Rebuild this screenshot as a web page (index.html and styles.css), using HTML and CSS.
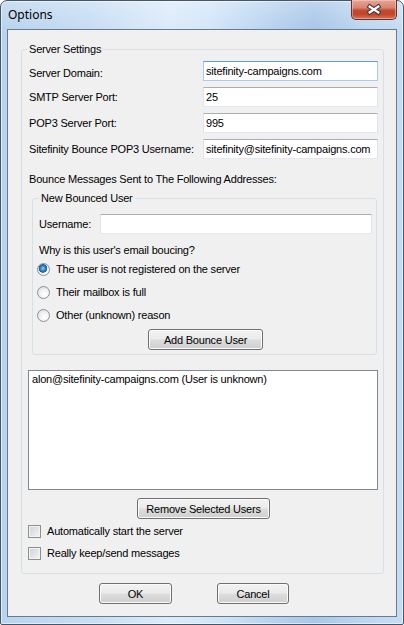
FILE: index.html
```html
<!DOCTYPE html>
<html>
<head>
<meta charset="utf-8">
<link rel="stylesheet" href="styles.css">
</head>
<body>
<div class="window">
  <div class="titlebar">
    <span class="title">Options</span>
    <button class="close" aria-label="Close">
      <svg width="46" height="19" viewBox="0 0 46 19">
        <path d="M18.5 6.5 L27.5 12.5 M27.5 6.5 L18.5 12.5" stroke="#4a3a3a" stroke-width="4.6" stroke-linecap="square" fill="none"/>
        <path d="M18.5 6.5 L27.5 12.5 M27.5 6.5 L18.5 12.5" stroke="#ffffff" stroke-width="2.4" stroke-linecap="square" fill="none"/>
      </svg>
    </button>
  </div>
  <div class="client">
    <fieldset class="group server">
      <legend>Server Settings</legend>
      <div class="fields">
        <label class="lbl lbl-first">Server Domain:</label>
        <input class="txt focused" type="text" value="sitefinity-campaigns.com">
        <label class="lbl">SMTP Server Port:</label>
        <input class="txt" type="text" value="25">
        <label class="lbl">POP3 Server Port:</label>
        <input class="txt" type="text" value="995">
        <label class="lbl">Sitefinity Bounce POP3 Username:</label>
        <input class="txt" type="text" value="sitefinity@sitefinity-campaigns.com">
      </div>
      <div class="bounce-title">Bounce Messages Sent to The Following Addresses:</div>
      <fieldset class="group newuser">
        <legend>New Bounced User</legend>
        <div class="user-row">
          <label class="user-lbl">Username:</label>
          <input class="txt user-input" type="text" value="">
        </div>
        <div class="why">Why is this user's email boucing?</div>
        <div class="radios">
          <label class="opt"><input class="radio" type="radio" name="reason" checked><span>The user is not registered on the server</span></label>
          <label class="opt"><input class="radio" type="radio" name="reason"><span>Their mailbox is full</span></label>
          <label class="opt"><input class="radio" type="radio" name="reason"><span>Other (unknown) reason</span></label>
        </div>
        <button class="btn add-btn">Add Bounce User</button>
      </fieldset>
      <div class="list">
        <div class="list-item">alon@sitefinity-campaigns.com (User is unknown)</div>
      </div>
      <button class="btn remove-btn">Remove Selected Users</button>
      <div class="checks">
        <label class="opt chk-row"><input class="check" type="checkbox"><span>Automatically start the server</span></label>
        <label class="opt chk-row"><input class="check" type="checkbox"><span>Really keep/send messages</span></label>
      </div>
    </fieldset>
    <div class="dialog-buttons">
      <button class="btn ok-btn">OK</button>
      <button class="btn cancel-btn">Cancel</button>
    </div>
  </div>
</div>
</body>
</html>
```

FILE: styles.css
```css
* { box-sizing: border-box; }

html, body {
  margin: 0;
  padding: 0;
  background: #ffffff;
}

body {
  font-family: "Liberation Sans", Arial, sans-serif;
  font-size: 11px;
  letter-spacing: -0.2px;
  color: #000;
}

.window {
  width: 404px;
  height: 625px;
  border: 1px solid #44566b;
  border-radius: 7px 7px 2px 2px;
  padding: 0 6px 7px 6px;
  display: flex;
  flex-direction: column;
  background:
    linear-gradient(180deg, rgba(255,255,255,0.25) 0px, rgba(255,255,255,0) 28px),
    linear-gradient(90deg, #b9d3ee 0%, #c7ddf3 22%, #dcebfa 42%, #d3e6f8 52%, #b7d2ee 68%, #a8c7e8 78%, #bdd6f0 90%, #c6dcf3 100%);
  box-shadow: inset 0 0 0 1px rgba(255,255,255,0.55);
}

.titlebar {
  height: 28px;
  display: flex;
  align-items: flex-start;
}

.title {
  font-family: "Noto Sans", "Open Sans", sans-serif;
  font-size: 12px;
  letter-spacing: 0;
  line-height: 16px;
  padding-top: 6px;
  padding-left: 1px;
  color: #000;
}

.close {
  margin-left: auto;
  margin-top: -1px;
  width: 46px;
  height: 20px;
  padding: 0;
  border: 1px solid #6b2f26;
  border-top: none;
  border-radius: 0 0 5px 5px;
  background: linear-gradient(180deg, #e6a597 0%, #d88571 40%, #c24a31 55%, #c0452b 75%, #d67457 100%);
  box-shadow: inset 0 0 0 1px rgba(255,220,210,0.45);
  display: flex;
}

.close svg { display: block; }

.client {
  flex: 1;
  background: #f0f0f0;
  border: 1px solid #687a8e;
  padding-top: 13px;
  display: flex;
  flex-direction: column;
}

.group {
  border: 1px solid #d5dfe5;
  border-radius: 3px;
  margin: 0;
  min-width: 0;
}

.group legend {
  font-size: 11px;
  line-height: 13px;
  padding: 0 2px;
}

.server {
  margin: 0 12px 0 13px;
  padding: 5px 5px 9px 7px;
  display: flex;
  flex-direction: column;
}

.server > legend { margin-left: -2px; }

.fields {
  display: grid;
  grid-template-columns: 174px 175px;
  grid-auto-rows: 20px;
  row-gap: 6px;
  align-items: center;
}

.lbl { line-height: 13px; white-space: nowrap; }
.lbl-first { padding-top: 4px; }

.txt {
  height: 20px;
  border: 1px solid;
  border-color: #abadb3 #e2e3ea #e3e9ef #e2e3ea;
  background: #fff;
  font-family: "Liberation Sans", Arial, sans-serif;
  font-size: 11px;
  letter-spacing: -0.2px;
  color: #000;
  padding: 0 2px;
  margin: 0;
  outline: none;
}

.txt.focused { border-color: #569de5 #aacbee #aacbee #aacbee; }

.bounce-title {
  margin-top: 14px;
  line-height: 13px;
}

.newuser {
  margin: 6px 1px 0 3px;
  padding: 9px 4px 4px 6px;
  display: flex;
  flex-direction: column;
}

.user-row {
  display: flex;
  align-items: center;
  height: 20px;
}

.user-lbl { width: 61px; line-height: 13px; }
.user-input { flex: 1; }

.why {
  margin-top: 10px;
  line-height: 13px;
}

.radios {
  margin-top: 1px;
  display: flex;
  flex-direction: column;
}

.opt {
  display: flex;
  align-items: center;
  height: 23px;
  line-height: 13px;
}

.radio {
  appearance: none;
  -webkit-appearance: none;
  width: 13px;
  height: 13px;
  margin: 0 6px 0 -2px;
  border: 1px solid #8e9095;
  border-radius: 50%;
  background: radial-gradient(circle at 60% 65%, #ffffff 0%, #f4f4f4 40%, #d4d4d4 100%);
  flex: none;
}

.radio:checked {
  background:
    radial-gradient(circle at 45% 40%, #9bd4fb 0px, #3c8ed3 2px, #1c5b96 4px, rgba(0,0,0,0) 4.6px),
    radial-gradient(circle at 60% 65%, #ffffff 0%, #f4f4f4 40%, #d4d4d4 100%);
}

.btn {
  font-family: "Liberation Sans", Arial, sans-serif;
  font-size: 11px;
  letter-spacing: -0.2px;
  color: #000;
  height: 21px;
  padding: 0;
  border: 1px solid #707070;
  border-radius: 3px;
  background: linear-gradient(180deg, #f2f2f2 0%, #ebebeb 48%, #dddddd 52%, #cfcfcf 100%);
  box-shadow: inset 0 0 0 1px #fbfbfb;
}

.add-btn {
  width: 115px;
  margin: 2px auto 0 auto;
}

.list {
  margin: 15px 0 0 -1px;
  width: 350px;
  height: 120px;
  border: 1px solid #828790;
  background: #fff;
  padding: 2px 3px;
}

.list-item { line-height: 13px; }

.remove-btn {
  width: 133px;
  margin: 8px auto 0 auto;
}

.checks {
  margin-top: 1px;
  display: flex;
  flex-direction: column;
}

.chk-row { height: 22px; }

.check {
  appearance: none;
  -webkit-appearance: none;
  width: 13px;
  height: 13px;
  margin: 0 6px 0 -1px;
  border: 1px solid #8e8f8f;
  background: linear-gradient(135deg, #cfd2d6 0%, #e4e5e7 55%, #f6f6f6 100%);
  box-shadow: inset 0 0 0 1px #f3f3f3;
  flex: none;
}

.dialog-buttons {
  margin-top: 9px;
  padding-left: 91px;
  display: flex;
  gap: 45px;
}

.ok-btn { width: 73px; }
.cancel-btn { width: 72px; }
```
